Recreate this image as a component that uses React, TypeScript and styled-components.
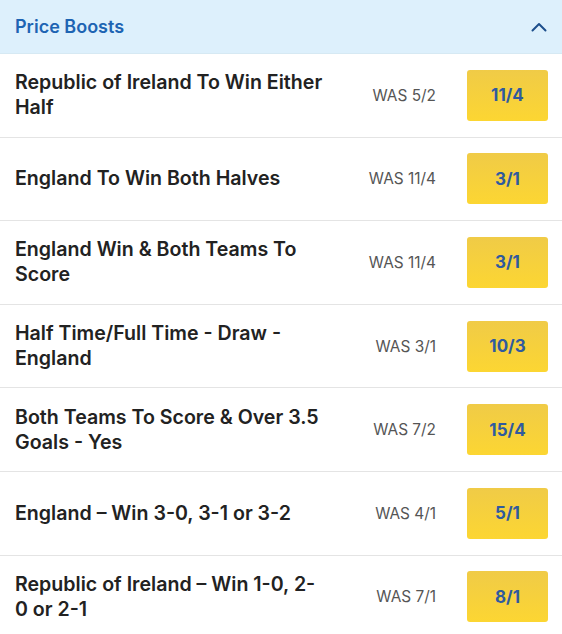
import React from 'react'
import styled, { createGlobalStyle } from 'styled-components'

const GlobalStyle = createGlobalStyle`
  body {
    margin: 0;
    background: #ffffff;
    font-family: Inter, "Noto Sans", sans-serif;
  }
`

const Panel = styled.section`
  width: 562px;
  background: #ffffff;
`

const Header = styled.div`
  display: flex;
  align-items: center;
  justify-content: space-between;
  height: 54px;
  padding: 0 15px;
  box-sizing: border-box;
  background: #ddf0fc;
  border-bottom: 1px solid #d6e9f3;
`

const Title = styled.h2`
  margin: 0;
  font-size: 18px;
  font-weight: 600;
  color: #1d64b3;
`

const Row = styled.div`
  display: flex;
  align-items: center;
  height: 83.6px;
  padding: 0 14px 0 15px;
  box-sizing: border-box;
  border-bottom: 1px solid #e4e4e4;
`

const Label = styled.div`
  flex: 1;
  max-width: 332px;
  font-size: 19.6px;
  line-height: 25px;
  font-weight: 600;
  color: #222222;
  white-space: pre-line;
`

const Was = styled.div`
  margin-left: auto;
  margin-right: 31px;
  font-size: 15.4px;
  color: #555555;
`

const PriceButton = styled.button`
  width: 81px;
  height: 51px;
  border: none;
  border-radius: 3px;
  background: linear-gradient(180deg, #f0cb47 0%, #fcd632 100%);
  color: #2f5a9f;
  font-family: Inter, "Noto Sans", sans-serif;
  font-size: 17px;
  font-weight: 700;
  cursor: pointer;
`

type Boost = { label: string; was: string; price: string }

const boosts: Boost[] = [
  { label: 'Republic of Ireland To Win Either Half', was: '5/2', price: '11/4' },
  { label: 'England To Win Both Halves', was: '11/4', price: '3/1' },
  { label: 'England Win & Both Teams To Score', was: '11/4', price: '3/1' },
  { label: 'Half Time/Full Time - Draw - England', was: '3/1', price: '10/3' },
  { label: 'Both Teams To Score & Over 3.5 Goals - Yes', was: '7/2', price: '15/4' },
  { label: 'England – Win 3-0, 3-1 or 3-2', was: '4/1', price: '5/1' },
  { label: 'Republic of Ireland – Win 1-0, 2-\n0 or 2-1', was: '7/1', price: '8/1' },
]

function Chevron() {
  return (
    <svg width="16" height="10" viewBox="0 0 16 10" fill="none">
      <path d="M1.5 8.5L8 2l6.5 6.5" stroke="#1d4f8c" strokeWidth="2" strokeLinecap="round" strokeLinejoin="round" />
    </svg>
  )
}

export default function App() {
  return (
    <Panel>
      <GlobalStyle />
      <Header>
        <Title>Price Boosts</Title>
        <Chevron />
      </Header>
      {boosts.map((b) => (
        <Row key={b.label}>
          <Label>{b.label}</Label>
          <Was>WAS {b.was}</Was>
          <PriceButton>{b.price}</PriceButton>
        </Row>
      ))}
    </Panel>
  )
}
